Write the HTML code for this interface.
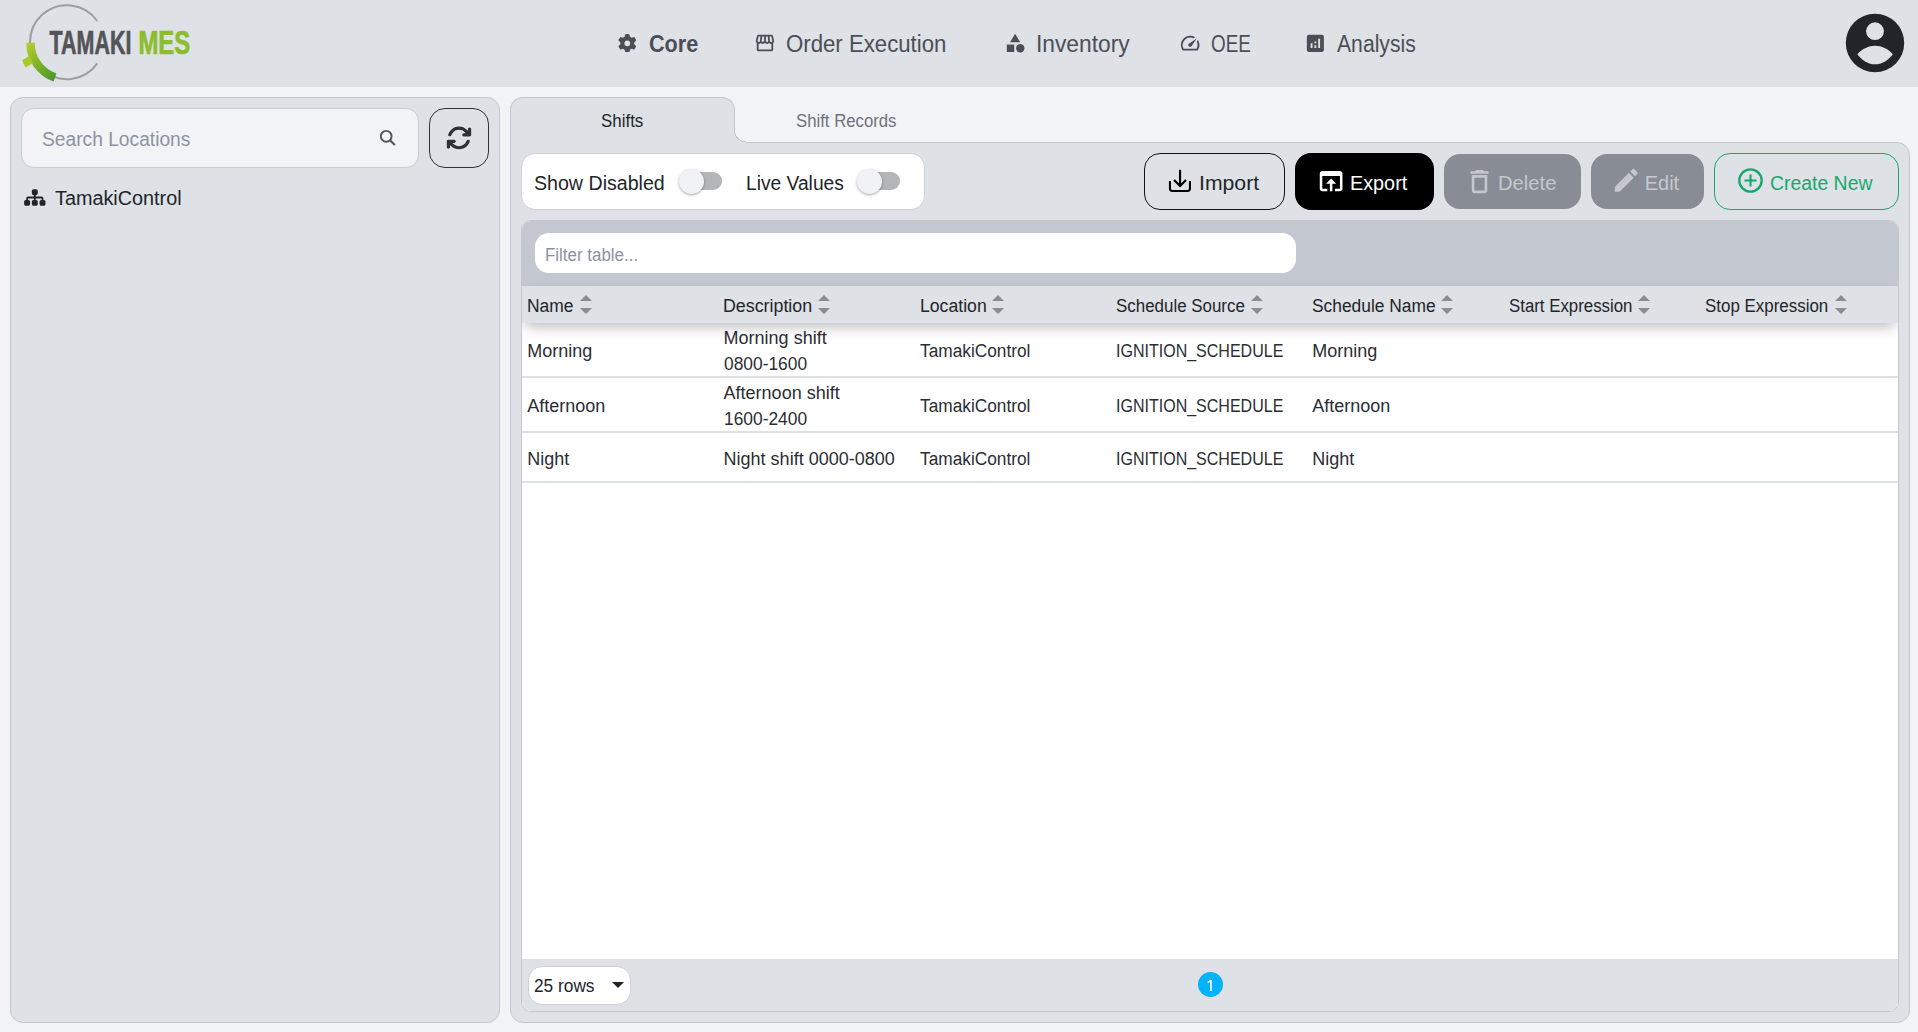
<!DOCTYPE html>
<html><head><meta charset="utf-8">
<style>
*{box-sizing:border-box;margin:0;padding:0}
html,body{width:1918px;height:1032px;overflow:hidden;background:#f2f3f6;font-family:"Liberation Sans",sans-serif;color:#212529}
.abs{position:absolute}
.t{position:absolute;white-space:nowrap;line-height:1}
.panel{position:absolute;background:#dee1e6;border:1px solid #c3c7cd}
</style></head><body>
<div class="abs" style="left:0;top:0;width:1918px;height:87px;background:#dee1e6"></div>
<svg class="abs" style="left:0;top:0" width="200" height="87" viewBox="0 0 200 87">
<defs><linearGradient id="lg" gradientUnits="userSpaceOnUse" x1="26" y1="45" x2="56" y2="78"><stop offset="0" stop-color="#b3ce2b"/><stop offset="1" stop-color="#4c962b"/></linearGradient></defs>
<path d="M97.3 21 A37 37 0 1 0 97.3 63.4" fill="none" stroke="#9d9ea2" stroke-width="2"/>
<path d="M30.5 42.7 A36.5 36.5 0 0 0 55 77.5" fill="none" stroke="url(#lg)" stroke-width="8.5"/>
<path d="M22 60.2 L29.3 56 L33 63.2 L25.5 67.6 Z" fill="#a9ca2b"/>
<g fill="#545458" stroke="#545458" stroke-width="0.7">
<text x="0" y="0" font-family="Liberation Sans" font-weight="bold" font-size="32.5" transform="translate(49.6 54) scale(0.66 1)">TAMAKI</text></g>
<g fill="#8bbd2d" stroke="#8bbd2d" stroke-width="0.7">
<text x="0" y="0" font-family="Liberation Sans" font-weight="bold" font-size="32.5" transform="translate(138.4 54) scale(0.735 1)">MES</text></g>
</svg>
<svg class="abs" style="left:617.7px;top:33.8px" width="18.6" height="18.6" viewBox="0 0 512 512"><path fill="#4a4f57" d="M495.9 166.6c3.2 8.7.5 18.4-6.4 24.6l-43.3 39.4c1.1 8.3 1.7 16.8 1.7 25.4s-.6 17.1-1.7 25.4l43.3 39.4c6.9 6.2 9.6 15.9 6.4 24.6-4.4 11.9-9.7 23.3-15.8 34.3l-4.7 8.1c-6.6 11-14 21.4-22.1 31.2-5.9 7.2-15.7 9.6-24.5 6.8l-55.7-17.7c-13.4 10.3-28.2 18.9-44 25.4l-12.5 57.1c-2 9.1-9 16.3-18.2 17.8-13.8 2.3-28 3.5-42.5 3.5s-28.7-1.2-42.5-3.5c-9.2-1.5-16.2-8.7-18.2-17.8l-12.5-57.1c-15.8-6.5-30.6-15.1-44-25.4L83.1 425.9c-8.8 2.8-18.6.3-24.5-6.8-8.1-9.8-15.5-20.2-22.1-31.2l-4.7-8.1c-6.1-11-11.4-22.4-15.8-34.3-3.2-8.7-.5-18.4 6.4-24.6l43.3-39.4C64.6 273.1 64 264.6 64 256s.6-17.1 1.7-25.4L22.4 191.2c-6.9-6.2-9.6-15.9-6.4-24.6 4.4-11.9 9.7-23.3 15.8-34.3l4.7-8.1c6.6-11 14-21.4 22.1-31.2 5.9-7.2 15.7-9.6 24.5-6.8l55.7 17.7c13.4-10.3 28.2-18.9 44-25.4l12.5-57.1c2-9.1 9-16.3 18.2-17.8C227.3 1.2 241.5 0 256 0s28.7 1.2 42.5 3.5c9.2 1.5 16.2 8.7 18.2 17.8l12.5 57.1c15.8 6.5 30.6 15.1 44 25.4l55.7-17.7c8.8-2.8 18.6-.3 24.5 6.8 8.1 9.8 15.5 20.2 22.1 31.2l4.7 8.1c6.1 11 11.4 22.4 15.8 34.3zM256 336a80 80 0 1 0 0-160 80 80 0 1 0 0 160z"/></svg>
<svg class="abs" style="left:754.2px;top:32.25px" width="21.96" height="21.96" viewBox="0 0 24 24"><path fill="#4a4f57" d="M21.9 8.89l-1.05-4.37c-.22-.9-1-1.52-1.91-1.52H5.05c-.9 0-1.69.63-1.9 1.52L2.1 8.890c-.24 1.02-.02 2.06.62 2.88.08.11.19.19.28.29V19c0 1.1.9 2 2 2h14c1.1 0 2-.9 2-2v-6.94c.09-.09.2-.18.28-.28.64-.82.87-1.87.62-2.89zm-2.99-3.9l1.05 4.37c.1.42.01.84-.25 1.17-.14.18-.44.47-.94.47-.61 0-1.14-.49-1.21-1.14L16.98 5l1.93-.01zM13 5h1.96l.54 4.52c.05.39-.07.78-.33 1.07-.22.26-.54.41-.95.41-.67 0-1.22-.59-1.22-1.31V5zM8.49 9.52L9.04 5H11v4.69c0 .72-.55 1.31-1.29 1.31-.34 0-.65-.15-.89-.41-.25-.29-.37-.68-.33-1.07zm-4.45-.16L5.05 5h1.97l-.58 4.86c-.08.65-.6 1.14-1.21 1.14-.49 0-.8-.29-.93-.47-.27-.32-.36-.75-.26-1.17zM5 19v-6.03c.08.01.15.03.23.03.87 0 1.66-.36 2.24-.95.6.6 1.4.95 2.31.95.87 0 1.65-.36 2.23-.93.59.57 1.39.93 2.29.93.84 0 1.64-.35 2.24-.95.58.59 1.370.95 2.24.95.08 0 .15-.02.23-.03V19H5z"/></svg>
<svg class="abs" style="left:1004.2px;top:32px" width="22.3" height="22.3" viewBox="0 0 24 24"><path fill="#4a4f57" d="M12 2l-5.5 9h11z"/><circle fill="#4a4f57" cx="17.5" cy="17.5" r="4.5"/><path fill="#4a4f57" d="M3 13.5h8v8H3z"/></svg>
<svg class="abs" style="left:1178.94px;top:32.08px" width="22.3" height="22.3" viewBox="0 0 24 24"><path fill="#4a4f57" d="M20.38 8.57l-1.23 1.85a8 8 0 0 1-.22 7.58H5.07A8 8 0 0 1 15.58 6.85l1.85-1.23A10 10 0 0 0 3.35 19a2 2 0 0 0 1.72 1h13.85a2 2 0 0 0 1.74-1 10 10 0 0 0-.27-10.44zm-9.79 6.84a2 2 0 0 0 2.83 0l5.66-8.49-8.49 5.66a2 2 0 0 0 0 2.83z"/></svg>
<svg class="abs" style="left:1303.86px;top:31.96px" width="22.73" height="22.73" viewBox="0 0 24 24"><path fill="#4a4f57" d="M19 3H5c-1.1 0-2 .9-2 2v14c0 1.1.9 2 2 2h14c1.1 0 2-.9 2-2V5c0-1.1-.9-2-2-2zM9 17H7v-5h2v5zm4 0h-2v-3h2v3zm0-5h-2v-2h2v2zm4 5h-2V7h2v10z"/></svg>
<svg class="abs" style="left:1845px;top:13px" width="60" height="60" viewBox="0 0 60 60"><circle cx="30" cy="30" r="29.2" fill="#212529"/><circle cx="30" cy="18.2" r="8.9" fill="#dee1e6"/><path d="M12.3 41.2 C17.5 35.6 23.5 32.7 30.1 32.7 C36.7 32.7 42.7 35.6 47.9 41.2 C43 47.5 37 51.3 30.1 51.3 C23.2 51.3 17.2 47.5 12.3 41.2 Z" fill="#dee1e6"/></svg>
<div class="t" style="left:648.5px;top:33px;font-size:23px;color:#4a4f57;font-weight:bold;transform:scaleX(0.94);transform-origin:0 0;">Core</div>
<div class="t" style="left:785.8px;top:33px;font-size:23px;color:#4a4f57;transform:scaleX(0.965);transform-origin:0 0;">Order Execution</div>
<div class="t" style="left:1036px;top:33px;font-size:23px;color:#4a4f57;transform:scaleX(0.99);transform-origin:0 0;">Inventory</div>
<div class="t" style="left:1211px;top:33px;font-size:23px;color:#4a4f57;transform:scaleX(0.82);transform-origin:0 0;">OEE</div>
<div class="t" style="left:1337px;top:33px;font-size:23px;color:#4a4f57;transform:scaleX(0.92);transform-origin:0 0;">Analysis</div>
<div class="panel" style="left:10px;top:97px;width:490px;height:926px;border-radius:13px"></div>
<div class="abs" style="left:21px;top:108px;width:398px;height:60px;border-radius:13px;background:#f2f3f6;border:1px solid #c9cdd3"></div>
<svg class="abs" style="left:379px;top:129px" width="18" height="18" viewBox="0 0 18 18"><circle cx="7.2" cy="7.3" r="5.4" fill="none" stroke="#4f5459" stroke-width="1.9"/><path d="M11 11.2 L15.8 16" stroke="#4f5459" stroke-width="2.1"/></svg>
<div class="abs" style="left:429px;top:108px;width:60px;height:60px;border-radius:16px;border:1px solid #2f3338"></div>
<svg class="abs" style="left:446px;top:125px" width="26" height="26" viewBox="0 0 512 512"><path fill="#2d3136" d="M105.1 202.6c7.7-21.8 20.2-42.3 37.8-59.8 62.5-62.5 163.8-62.5 226.3 0L386.3 160H352c-17.7 0-32 14.3-32 32s14.3 32 32 32H463.5c0 0 0 0 0 0h.4c17.7 0 32-14.3 32-32V80c0-17.7-14.3-32-32-32s-32 14.3-32 32v35.2L414.4 97.6C326.9 10.1 185.1 10.1 97.6 97.6 73.2 122 55.6 150.7 44.8 181.4c-5.9 16.7 2.9 34.9 19.5 40.8s34.9-2.9 40.8-19.5zM39 289.3c-5 1.5-9.8 4.2-13.7 8.2-4 4-6.7 8.8-8.1 14-.3 1.2-.6 2.5-.8 3.8-.3 1.7-.4 3.4-.4 5.1V432c0 17.7 14.3 32 32 32s32-14.3 32-32V396.9l17.6 17.5 0 0c87.5 87.4 229.3 87.4 316.7 0 24.4-24.4 42.1-53.1 52.9-83.7 5.9-16.7-2.9-34.9-19.5-40.8s-34.9 2.9-40.8 19.5c-7.7 21.8-20.2 42.3-37.8 59.8-62.5 62.5-163.8 62.5-226.3 0l-.1-.1L125.6 352H160c17.7 0 32-14.3 32-32s-14.3-32-32-32H48.4c-1.6 0-3.2 .1-4.8 .3s-3.1 .5-4.6 1z"/></svg>
<svg class="abs" style="left:24px;top:188px" width="24" height="19" viewBox="0 0 640 512"><path fill="#212529" d="M208 80c0-26.5 21.5-48 48-48h64c26.5 0 48 21.5 48 48v64c0 26.5-21.5 48-48 48h-8v40H464c30.9 0 56 25.1 56 56v32h8c26.5 0 48 21.5 48 48v64c0 26.5-21.5 48-48 48H464c-26.5 0-48-21.5-48-48V368c0-26.5 21.5-48 48-48h8V288c0-4.4-3.6-8-8-8H312v40h8c26.5 0 48 21.5 48 48v64c0 26.5-21.5 48-48 48H256c-26.5 0-48-21.5-48-48V368c0-26.5 21.5-48 48-48h8V280H112c-4.4 0-8 3.6-8 8v32h8c26.5 0 48 21.5 48 48v64c0 26.5-21.5 48-48 48H48c-26.5 0-48-21.5-48-48V368c0-26.5 21.5-48 48-48h8V288c0-30.9 25.1-56 56-56H264V192h-8c-26.5 0-48-21.5-48-48V80z"/></svg>
<div class="t" style="left:41.7px;top:129px;font-size:20px;color:#8c93a0;transform:scaleX(0.96);transform-origin:0 0;">Search Locations</div>
<div class="t" style="left:55px;top:188px;font-size:20px;color:#212529;transform:scaleX(0.99);transform-origin:0 0;">TamakiControl</div>
<div class="panel" style="left:510px;top:142px;width:1400px;height:881px;border-radius:0 13px 13px 13px"></div>
<div class="abs" style="left:510px;top:97px;width:225px;height:46px;background:#dee1e6;border:1px solid #c3c7cd;border-bottom:none;border-radius:13px 13px 0 0"></div>
<div class="abs" style="left:734px;top:130px;width:13px;height:13px;background:radial-gradient(circle 14px at 12.5px 0px,#f2f3f6 11.5px,#c3c7cd 11.6px,#c3c7cd 12.5px,#dee1e6 12.6px)"></div>
<div class="t" style="left:601px;top:112px;font-size:18px;color:#212529;transform:scaleX(0.94);transform-origin:0 0;">Shifts</div>
<div class="t" style="left:796.4px;top:112px;font-size:18px;color:#6c737c;transform:scaleX(0.93);transform-origin:0 0;">Shift Records</div>
<div class="abs" style="left:521px;top:153px;width:404px;height:57px;border-radius:14px;background:#fff;border:1px solid #cdd1d6"></div>
<div class="abs" style="left:685px;top:172px;width:37px;height:18px;border-radius:9px;background:#b4b5b9"></div>
<div class="abs" style="left:679px;top:169px;width:25px;height:25px;border-radius:50%;background:#f0f2f5;box-shadow:0 1px 3px rgba(0,0,0,.35)"></div>
<div class="abs" style="left:863px;top:172px;width:37px;height:18px;border-radius:9px;background:#b4b5b9"></div>
<div class="abs" style="left:857px;top:169px;width:25px;height:25px;border-radius:50%;background:#f0f2f5;box-shadow:0 1px 3px rgba(0,0,0,.35)"></div>
<div class="abs" style="left:1144px;top:153px;width:141px;height:57px;border-radius:16px;border:1px solid #111315"></div>
<svg class="abs" style="left:1168px;top:169px" width="24" height="24" viewBox="0 0 24 24"><path d="M1.95 11.9 V19.6 Q1.95 21.95 4.3 21.95 H19.6 Q21.95 21.95 21.95 19.6 V11.9" fill="none" stroke="#000" stroke-width="2.1"/><path d="M12.05 0.7 V16.4 M6.1 11 L12.05 16.9 L18 11" fill="none" stroke="#000" stroke-width="2.15"/></svg>
<div class="abs" style="left:1295px;top:153px;width:139px;height:57px;border-radius:16px;background:#000"></div>
<svg class="abs" style="left:1315.97px;top:165.96px" width="30.24" height="30.24" viewBox="0 0 24 24"><path fill="#fff" d="M19 4H5c-1.11 0-2 .9-2 2v12c0 1.1.89 2 2 2h4v-2H5V8h14v10h-4v2h4c1.1 0 2-.9 2-2V6c0-1.1-.89-2-2-2zm-7 6l-4 4h3v6h2v-6h3l-4-4z"/></svg>
<div class="abs" style="left:1444px;top:154px;width:137px;height:55px;border-radius:16px;background:#878c95"></div>
<svg class="abs" style="left:1463.55px;top:165.74px" width="31" height="31" viewBox="0 0 24 24"><path fill="#c4c8ce" d="M6 19c0 1.1.9 2 2 2h8c1.1 0 2-.9 2-2V7H6v12zM8 9h8v10H8V9zm7.5-5l-1-1h-5l-1 1H5v2h14V4z"/></svg>
<div class="abs" style="left:1591px;top:154px;width:113px;height:55px;border-radius:16px;background:#878c95"></div>
<svg class="abs" style="left:1611.1px;top:165.3px" width="30.5" height="30.5" viewBox="0 0 24 24"><path fill="#c4c8ce" d="M3 17.25V21h3.75L17.81 9.94l-3.75-3.75L3 17.25zM20.71 7.04c.39-.39.39-1.02 0-1.41l-2.34-2.34c-.39-.39-1.020-.39-1.41 0l-1.83 1.83 3.75 3.75 1.83-1.83z"/></svg>
<div class="abs" style="left:1714px;top:153px;width:185px;height:57px;border-radius:16px;border:1px solid #19a86c"></div>
<svg class="abs" style="left:1736.5px;top:167.4px" width="27" height="27" viewBox="0 0 27 27"><circle cx="13.5" cy="13.5" r="11.2" fill="none" stroke="#12a86b" stroke-width="2.3"/><path d="M13.5 7.5 V19.5 M7.5 13.5 H19.5" stroke="#12a86b" stroke-width="2.1"/></svg>
<div class="t" style="left:534px;top:173px;font-size:20px;color:#212529;transform:scaleX(0.98);transform-origin:0 0;">Show Disabled</div>
<div class="t" style="left:746px;top:173px;font-size:20px;color:#212529;transform:scaleX(0.96);transform-origin:0 0;">Live Values</div>
<div class="t" style="left:1199px;top:173px;font-size:20px;color:#212529;transform:scaleX(1.06);transform-origin:0 0;">Import</div>
<div class="t" style="left:1350.4px;top:173px;font-size:20px;color:#ffffff;transform:scaleX(0.99);transform-origin:0 0;">Export</div>
<div class="t" style="left:1498px;top:173px;font-size:20px;color:#c4c8ce;transform:scaleX(1.01);transform-origin:0 0;">Delete</div>
<div class="t" style="left:1644.7px;top:173px;font-size:20px;color:#c4c8ce;">Edit</div>
<div class="t" style="left:1770px;top:173px;font-size:20px;color:#19a86c;transform:scaleX(0.97);transform-origin:0 0;">Create New</div>
<div class="abs" style="left:521px;top:220px;width:1378px;height:792px;border-radius:10px;border:1px solid #c3c7cd;background:#fff;overflow:hidden">
  <div class="abs" style="left:0;top:0;width:1376px;height:65px;background:#c3c7cf"></div>
  <div class="abs" style="left:13px;top:12px;width:761px;height:40px;border-radius:14px;background:#fff"></div>
  <div class="abs" style="left:0;top:65px;width:1376px;height:37px;background:#dee1e6;box-shadow:0 7px 13px -3px rgba(0,0,0,.26);z-index:2"></div>
  <div class="abs" style="left:0;top:155px;width:1376px;height:2px;background:#dde0e5"></div>
  <div class="abs" style="left:0;top:210px;width:1376px;height:2px;background:#dde0e5"></div>
  <div class="abs" style="left:0;top:260px;width:1376px;height:2px;background:#dde0e5"></div>
  <div class="abs" style="left:0;top:738px;width:1376px;height:52px;background:#dee1e6"></div>
</div>
<div class="t" style="left:544.5px;top:246px;font-size:18px;color:#8a93a3;transform:scaleX(0.94);transform-origin:0 0;">Filter table...</div>
<div class="t" style="left:527.2px;top:297px;font-size:18px;color:#212529;transform:scaleX(0.97);transform-origin:0 0;z-index:3;">Name</div>
<svg class="abs" style="left:580px;top:295px;z-index:3" width="12" height="19" viewBox="0 0 12 19"><path d="M6 0 L12 6 H0 Z M0 13 H12 L6 19 Z" fill="#878c95"/></svg>
<div class="t" style="left:723px;top:297px;font-size:18px;color:#212529;transform:scaleX(0.99);transform-origin:0 0;z-index:3;">Description</div>
<svg class="abs" style="left:818px;top:295px;z-index:3" width="12" height="19" viewBox="0 0 12 19"><path d="M6 0 L12 6 H0 Z M0 13 H12 L6 19 Z" fill="#878c95"/></svg>
<div class="t" style="left:919.8px;top:297px;font-size:18px;color:#212529;transform:scaleX(0.98);transform-origin:0 0;z-index:3;">Location</div>
<svg class="abs" style="left:992px;top:295px;z-index:3" width="12" height="19" viewBox="0 0 12 19"><path d="M6 0 L12 6 H0 Z M0 13 H12 L6 19 Z" fill="#878c95"/></svg>
<div class="t" style="left:1116px;top:297px;font-size:18px;color:#212529;transform:scaleX(0.94);transform-origin:0 0;z-index:3;">Schedule Source</div>
<svg class="abs" style="left:1251.4px;top:295px;z-index:3" width="12" height="19" viewBox="0 0 12 19"><path d="M6 0 L12 6 H0 Z M0 13 H12 L6 19 Z" fill="#878c95"/></svg>
<div class="t" style="left:1312.2px;top:297px;font-size:18px;color:#212529;transform:scaleX(0.965);transform-origin:0 0;z-index:3;">Schedule Name</div>
<svg class="abs" style="left:1441px;top:295px;z-index:3" width="12" height="19" viewBox="0 0 12 19"><path d="M6 0 L12 6 H0 Z M0 13 H12 L6 19 Z" fill="#878c95"/></svg>
<div class="t" style="left:1509.2px;top:297px;font-size:18px;color:#212529;transform:scaleX(0.935);transform-origin:0 0;z-index:3;">Start Expression</div>
<svg class="abs" style="left:1638px;top:295px;z-index:3" width="12" height="19" viewBox="0 0 12 19"><path d="M6 0 L12 6 H0 Z M0 13 H12 L6 19 Z" fill="#878c95"/></svg>
<div class="t" style="left:1705.4px;top:297px;font-size:18px;color:#212529;transform:scaleX(0.94);transform-origin:0 0;z-index:3;">Stop Expression</div>
<svg class="abs" style="left:1835px;top:295px;z-index:3" width="12" height="19" viewBox="0 0 12 19"><path d="M6 0 L12 6 H0 Z M0 13 H12 L6 19 Z" fill="#878c95"/></svg>
<div class="t" style="left:527.2px;top:342px;font-size:18px;color:#2a2e33;">Morning</div>
<div class="t" style="left:723.6px;top:329px;font-size:18px;color:#2a2e33;">Morning shift</div>
<div class="t" style="left:723.6px;top:355px;font-size:18px;color:#2a2e33;transform:scaleX(0.965);transform-origin:0 0;">0800-1600</div>
<div class="t" style="left:919.8px;top:342px;font-size:18px;color:#2a2e33;transform:scaleX(0.96);transform-origin:0 0;">TamakiControl</div>
<div class="t" style="left:1116px;top:342px;font-size:18px;color:#2a2e33;transform:scaleX(0.89);transform-origin:0 0;">IGNITION_SCHEDULE</div>
<div class="t" style="left:1312.2px;top:342px;font-size:18px;color:#2a2e33;">Morning</div>
<div class="t" style="left:527.2px;top:397px;font-size:18px;color:#2a2e33;">Afternoon</div>
<div class="t" style="left:723.6px;top:384px;font-size:18px;color:#2a2e33;">Afternoon shift</div>
<div class="t" style="left:723.6px;top:410px;font-size:18px;color:#2a2e33;transform:scaleX(0.965);transform-origin:0 0;">1600-2400</div>
<div class="t" style="left:919.8px;top:397px;font-size:18px;color:#2a2e33;transform:scaleX(0.96);transform-origin:0 0;">TamakiControl</div>
<div class="t" style="left:1116px;top:397px;font-size:18px;color:#2a2e33;transform:scaleX(0.89);transform-origin:0 0;">IGNITION_SCHEDULE</div>
<div class="t" style="left:1312.2px;top:397px;font-size:18px;color:#2a2e33;">Afternoon</div>
<div class="t" style="left:527.2px;top:450px;font-size:18px;color:#2a2e33;">Night</div>
<div class="t" style="left:723.6px;top:450px;font-size:18px;color:#2a2e33;">Night shift 0000-0800</div>
<div class="t" style="left:919.8px;top:450px;font-size:18px;color:#2a2e33;transform:scaleX(0.96);transform-origin:0 0;">TamakiControl</div>
<div class="t" style="left:1116px;top:450px;font-size:18px;color:#2a2e33;transform:scaleX(0.89);transform-origin:0 0;">IGNITION_SCHEDULE</div>
<div class="t" style="left:1312.2px;top:450px;font-size:18px;color:#2a2e33;">Night</div>
<div class="abs" style="left:527.5px;top:965.5px;width:103px;height:39.5px;border-radius:14px;background:#fff;border:1px solid #cdd1d6"></div>
<svg class="abs" style="left:612px;top:982px" width="12" height="6" viewBox="0 0 12 6"><path d="M0 0 H12 L6 6 Z" fill="#212529"/></svg>
<div class="abs" style="left:1198px;top:972px;width:25px;height:25px;border-radius:50%;background:#00b3fc"></div>
<div class="t" style="left:534px;top:977px;font-size:18px;color:#212529;transform:scaleX(0.96);transform-origin:0 0;">25 rows</div>
<svg class="abs" style="left:1198px;top:972px" width="25" height="25" viewBox="0 0 25 25"><path d="M12.9 8 V19" stroke="#fff" stroke-width="1.7"/><path d="M13.2 8.1 L9.6 10.6" stroke="#fff" stroke-width="1.4"/></svg>
</body></html>
